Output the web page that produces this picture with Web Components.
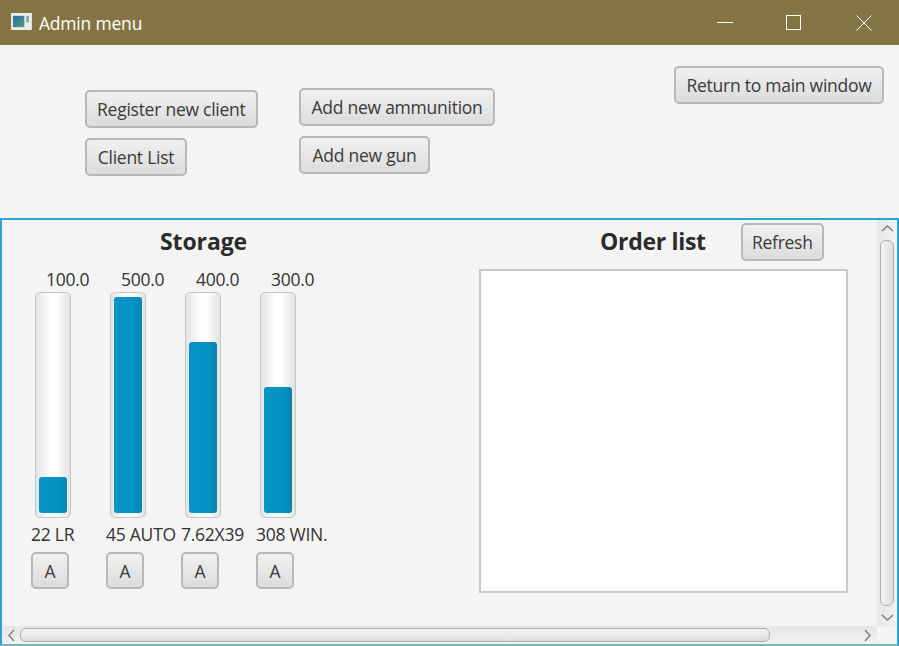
<!DOCTYPE html>
<html>
<head>
<meta charset="utf-8">
<title>Admin menu</title>
<style>
  html, body { margin: 0; padding: 0; background: #f4f4f4; }
  body { font-family: "Open Sans", "Noto Sans", sans-serif; color: #333; overflow: hidden; }
</style>
</head>
<body>
<admin-window></admin-window>

<script>
class TitleBar extends HTMLElement {
  constructor () {
    super()
    this.attachShadow({ mode: 'open' }).innerHTML = /* html */`
      <style>
        :host { display: flex; align-items: center; height: 45px; background: #857443; color: #fff; font-size: 17.5px; box-sizing: border-box; padding-left: 11px; }
        .icon { width: 21px; height: 17px; margin-right: 7px; margin-top: -3px; }
        .title { flex: 1; letter-spacing: -0.2px; }
        .ctl { width: 71px; height: 45px; display: flex; align-items: center; justify-content: center; }
        .ctl.min { width: 70px; }
        .ctl.max { width: 68px; }
        svg { display: block; }
      </style>
      <svg class="icon" viewBox="0 0 22 18">
        <defs>
          <linearGradient id="g" x1="0" y1="0" x2="1" y2="1">
            <stop offset="0" stop-color="#2d6fa5"/><stop offset="1" stop-color="#4f9a7c"/>
          </linearGradient>
        </defs>
        <rect width="22" height="18" fill="#e9edf0"/>
        <rect x="2" y="3" width="12" height="12" fill="url(#g)"/>
        <rect x="16" y="3" width="3" height="7" fill="#7fb0b0"/>
      </svg>
      <span class="title"><slot></slot></span>
      <span class="ctl min"><svg width="16" height="16" viewBox="0 0 16 16"><path d="M0 7.5H16" stroke="#fff" fill="none"/></svg></span>
      <span class="ctl max"><svg width="16" height="16" viewBox="0 0 16 16"><rect x="0.5" y="0.5" width="14" height="14" stroke="#fff" fill="none"/></svg></span>
      <span class="ctl"><svg width="16" height="16" viewBox="0 0 16 16"><path d="M0.5 0.5L15.5 15.5M15.5 0.5L0.5 15.5" stroke="#fff" fill="none"/></svg></span>
    `
  }
}

class FxButton extends HTMLElement {
  constructor () {
    super()
    this.attachShadow({ mode: 'open' }).innerHTML = /* html */`
      <style>
        :host { display: inline-flex; align-items: center; justify-content: center; box-sizing: border-box; height: 38px; padding: 0 10px; border: 2px solid #b8b8b8; border-radius: 5px; background: linear-gradient(#f0f0f0, #dcdcdc); font-size: 17.5px; letter-spacing: -0.25px; color: #3a3a3a; white-space: nowrap; }
      </style>
      <slot></slot>
    `
  }
}

class AmmoGauge extends HTMLElement {
  constructor () {
    super()
    const level = this.getAttribute('level')
    const amount = this.getAttribute('amount')
    const name = this.getAttribute('name')
    this.attachShadow({ mode: 'open' }).innerHTML = /* html */`
      <style>
        :host { display: flex; flex-direction: column; align-items: flex-start; width: 75px; font-size: 17.5px; letter-spacing: -0.25px; color: #333; white-space: nowrap; }
        .amount { height: 24px; line-height: 22px; padding-left: 15px; }
        .track { box-sizing: border-box; width: 36px; height: 226px; margin-left: 4px; padding: 4px 3px; border: 1px solid #c6c6c6; border-radius: 5px; background: linear-gradient(90deg, #e4e4e4, #fff 45%, #fff 60%, #e2e2e2); display: flex; align-items: flex-end; }
        .fill { width: 100%; height: ${level}%; border-radius: 3px; background: linear-gradient(90deg, #0a94c6, #0093c4 70%, #0784b0); }
        .name { height: 34px; line-height: 32px; }
        fx-button { width: 38px; height: 37px; padding: 0; }
      </style>
      <div class="amount">${amount}</div>
      <div class="track"><div class="fill"></div></div>
      <div class="name">${name}</div>
      <fx-button>A</fx-button>
    `
  }
}

class ScrollTrack extends HTMLElement {
  constructor () {
    super()
    const vertical = this.hasAttribute('vertical')
    const back = vertical ? 'M2 9L7.5 4L13 9' : 'M9 2L4 7.5L9 13'
    const next = vertical ? 'M2 4L7.5 9L13 4' : 'M4 2L9 7.5L4 13'
    this.attachShadow({ mode: 'open' }).innerHTML = /* html */`
      <style>
        :host { display: flex; flex-direction: ${vertical ? 'column' : 'row'}; align-items: center; background: linear-gradient(${vertical ? '90deg' : '180deg'}, #e6e6e6, #f2f2f2); ${vertical ? 'width: 20px;' : 'height: 18px;'} }
        svg { flex: none; display: block; }
        .thumb { box-sizing: border-box; border: 1px solid #adadad; border-radius: 6px; background: linear-gradient(${vertical ? '90deg' : '180deg'}, #f4f4f4, #dedede); ${vertical ? 'width: 14px; height: 366px;' : 'height: 14px; width: 750px;'} }
        .gap { flex: 1; }
      </style>
      <svg width="${vertical ? 15 : 13}" height="${vertical ? 13 : 15}" viewBox="0 0 ${vertical ? '15 13' : '13 15'}" style="${vertical ? 'margin: 2px 0 5px' : 'margin: 0 2px 0 3px'}"><path d="${back}" fill="none" stroke="#7c7c7c" stroke-width="1.4"/></svg>
      <div class="thumb"></div>
      <div class="gap"></div>
      <svg width="${vertical ? 15 : 13}" height="${vertical ? 13 : 15}" viewBox="0 0 ${vertical ? '15 13' : '13 15'}" style="${vertical ? 'margin: 0 0 2px' : 'margin: 0 3px 0 0'}"><path d="${next}" fill="none" stroke="#7c7c7c" stroke-width="1.4"/></svg>
    `
  }
}

class AdminWindow extends HTMLElement {
  constructor () {
    super()
    this.attachShadow({ mode: 'open' }).innerHTML = /* html */`
      <style>
        :host { display: flex; flex-direction: column; width: 899px; height: 646px; overflow: hidden; }
        h2 { margin: 0; font-size: 23px; font-weight: 700; color: #2b2b2b; line-height: 30px; letter-spacing: -0.3px; }

        .top { display: flex; align-items: flex-start; height: 173px; padding-left: 85px; box-sizing: border-box; }
        .stack { display: flex; flex-direction: column; align-items: flex-start; }
        .clients { gap: 10px; padding-top: 45px; width: 214px; }
        .stock { gap: 10px; padding-top: 43px; }
        .back { margin-left: auto; margin-right: 15px; margin-top: 21px; width: 210px; }
        .w-client { width: 102px; }
        .w-ammo { width: 196px; }
        .w-gun { width: 131px; }
        .w-refresh { width: 83px; }

        .pane { flex: 1; display: grid; grid-template-columns: 1fr 20px; grid-template-rows: 1fr 18px; border: 2px solid #2ba6d2; border-bottom-color: #7fb2b5; min-height: 0; }
        .content { display: flex; min-width: 0; min-height: 0; }

        .storage { width: 477px; box-sizing: border-box; padding: 3px 0 0 29px; }
        .storage h2 { margin: 3px 0 12px 129px; letter-spacing: -0.1px; }
        .gauges { display: flex; }

        .orders { width: 368px; }
        .orders header { display: flex; align-items: flex-start; height: 49px; padding-top: 3px; box-sizing: border-box; }
        .orders h2 { margin: 3px 35px 0 121px; }
        .list { box-sizing: border-box; width: 369px; height: 324px; background: #fff; border: 2px solid #c9c9c9; }

        .corner { background: #f4f4f4; }
      </style>

      <title-bar>Admin menu</title-bar>

      <section class="top">
        <div class="stack clients">
          <fx-button>Register new client</fx-button>
          <fx-button class="w-client">Client List</fx-button>
        </div>
        <div class="stack stock">
          <fx-button class="w-ammo">Add new ammunition</fx-button>
          <fx-button class="w-gun">Add new gun</fx-button>
        </div>
        <fx-button class="back">Return to main window</fx-button>
      </section>

      <section class="pane">
        <div class="content">
          <div class="storage">
            <h2>Storage</h2>
            <div class="gauges">
              <ammo-gauge amount="100.0" name="22 LR" level="16.67"></ammo-gauge>
              <ammo-gauge amount="500.0" name="45 AUTO" level="100"></ammo-gauge>
              <ammo-gauge amount="400.0" name="7.62X39" level="79.17"></ammo-gauge>
              <ammo-gauge amount="300.0" name="308 WIN." level="58.33"></ammo-gauge>
            </div>
          </div>
          <div class="orders">
            <header>
              <h2>Order list</h2>
              <fx-button class="w-refresh">Refresh</fx-button>
            </header>
            <div class="list"></div>
          </div>
        </div>
        <scroll-track vertical></scroll-track>
        <scroll-track></scroll-track>
        <div class="corner"></div>
      </section>
    `
  }
}

customElements.define('title-bar', TitleBar)
customElements.define('fx-button', FxButton)
customElements.define('ammo-gauge', AmmoGauge)
customElements.define('scroll-track', ScrollTrack)
customElements.define('admin-window', AdminWindow)
</script>
</body>
</html>
